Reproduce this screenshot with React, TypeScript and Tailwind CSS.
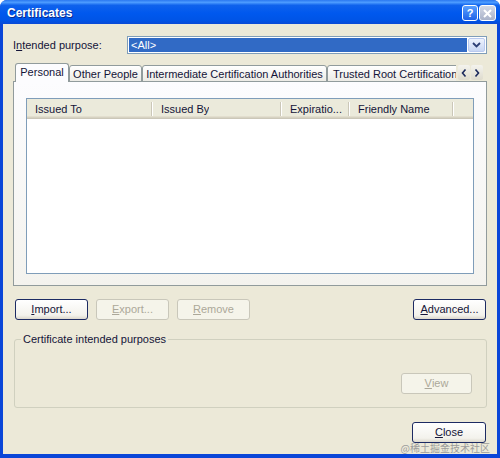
import type { ReactNode } from 'react';

const ink = 'text-[#141438]';

function XpButton({
  children,
  disabled = false,
  width = 'w-[73px]',
}: {
  children: ReactNode;
  disabled?: boolean;
  width?: string;
}) {
  return (
    <div
      className={`${width} flex h-[21px] items-center justify-center rounded-[3px] border text-[11px] ${
        disabled
          ? 'border-[#c9c7ba] bg-[#f5f4ea] text-[#aca899]'
          : `border-[#1d2b63] bg-[linear-gradient(to_bottom,#ffffff,#f3f2ec_80%,#dcd8cc)] ${ink}`
      }`}
    >
      {children}
    </div>
  );
}

function Tab({ label, selected = false, width }: { label: string; selected?: boolean; width: string }) {
  if (selected) {
    return (
      <div
        className={`${width} flex h-[19px] shrink-0 items-start justify-center rounded-t-[3px] border border-b-0 border-[#919b9c] bg-[#fcfcfe] pt-[1px] text-[11px] leading-[15px] ${ink}`}
      >
        {label}
      </div>
    );
  }
  return (
    <div
      className={`${width} flex h-[17px] shrink-0 items-start justify-center overflow-hidden whitespace-nowrap rounded-t-[3px] border border-[#919b9c] bg-[linear-gradient(to_bottom,#ffffff,#ecebe5)] pt-[1px] text-[11px] leading-[14px] ${ink}`}
    >
      {label}
    </div>
  );
}

function HeaderCell({ children, width }: { children?: ReactNode; width: string }) {
  return (
    <div className={`${width} flex h-full shrink-0 items-center justify-between`}>
      <span className={`truncate pl-[8px] text-[11px] ${ink}`}>{children}</span>
      <div className="h-[14px] w-[2px] border-l border-r border-l-[#cbc7b8] border-r-white" />
    </div>
  );
}

function Chevron({ dir }: { dir: 'left' | 'right' }) {
  return (
    <svg width="6" height="8" viewBox="0 0 6 8">
      <path
        d={dir === 'left' ? 'M4.5 0.5 L1.5 4 L4.5 7.5' : 'M1.5 0.5 L4.5 4 L1.5 7.5'}
        fill="none"
        stroke="#1c2a5c"
        strokeWidth="1.6"
      />
    </svg>
  );
}

export default function App() {
  return (
    <div className="relative flex h-[458px] w-[500px] flex-col overflow-hidden rounded-t-[7px] bg-[#0a46d8] font-['Liberation_Sans',Tahoma,sans-serif]">
      {/* title bar */}
      <div className="flex h-[24px] shrink-0 items-center justify-between bg-[linear-gradient(to_bottom,#2a78f0_0%,#4d9cff_10%,#0f62ec_22%,#0058ee_55%,#0054e6_85%,#0a4ad6_100%)] pl-[7px] pr-[4px] pt-[2px]">
        <span className="text-[12px] font-bold text-white [text-shadow:1px_1px_0_#0b2a8c]">
          Certificates
        </span>
        <div className="flex gap-[1px]">
          <div className="flex h-[16px] w-[16px] items-center justify-center rounded-[3px] border border-white bg-[linear-gradient(to_bottom,#5aa0ff,#1f62e8)] text-[11px] font-bold leading-none text-white">
            ?
          </div>
          <div className="flex h-[16px] w-[17px] items-center justify-center rounded-[3px] border border-white bg-[linear-gradient(to_bottom,#d4d9e6,#a9b2c9)]">
            <svg width="9" height="9" viewBox="0 0 9 9">
              <path d="M1 1 L8 8 M8 1 L1 8" stroke="#ffffff" strokeWidth="2" />
            </svg>
          </div>
        </div>
      </div>

      {/* body */}
      <div className="mx-[3px] mb-[4px] flex flex-1 flex-col bg-[#ece9d8] px-[10px]">
        {/* intended purpose */}
        <div className="mt-[12px] flex h-[18px] items-center">
          <span className={`w-[114px] text-[11px] ${ink}`}>
            I<span className="underline">n</span>tended purpose:
          </span>
          <div className="flex h-[18px] flex-1 border border-[#7f9db9] bg-white p-[1px]">
            <div className="flex flex-1 items-center bg-[#316ac5] pl-[2px] text-[11px] text-white">
              &lt;All&gt;
            </div>
            <div className="ml-[1px] flex w-[17px] items-center justify-center rounded-[2px] border border-[#b9c9ef] bg-[linear-gradient(to_bottom,#eef3fd,#c8d6f3)]">
              <svg width="9" height="6" viewBox="0 0 9 6">
                <path d="M1 1 L4.5 4.5 L8 1" fill="none" stroke="#2d3f75" strokeWidth="1.8" />
              </svg>
            </div>
          </div>
        </div>

        {/* tabs */}
        <div className="relative z-10 mb-[-1px] mt-[9px] flex h-[19px] items-end pl-[2px]">
          <div className="flex w-[441px] items-end overflow-hidden">
            <Tab label="Personal" selected width="w-[54px]" />
            <Tab label="Other People" width="w-[73px]" />
            <Tab label="Intermediate Certification Authorities" width="w-[185px]" />
            <div
              className={`flex h-[17px] w-[140px] shrink-0 items-start whitespace-nowrap rounded-t-[3px] border border-[#919b9c] bg-[linear-gradient(to_bottom,#ffffff,#ecebe5)] pl-[5px] pt-[1px] text-[11px] leading-[14px] ${ink}`}
            >
              Trusted Root Certification Authorities
            </div>
          </div>
          <div className="mb-[2px] ml-[2px] flex gap-[1px]">
            <div className="flex h-[15px] w-[12px] items-center justify-center rounded-[2px] bg-[linear-gradient(to_bottom,#f4f3ee,#dedbcd)]">
              <Chevron dir="left" />
            </div>
            <div className="flex h-[15px] w-[12px] items-center justify-center rounded-[2px] bg-[linear-gradient(to_bottom,#f4f3ee,#dedbcd)]">
              <Chevron dir="right" />
            </div>
          </div>
        </div>

        {/* tab panel */}
        <div className="h-[205px] border border-[#919b9c] bg-[linear-gradient(to_bottom,#fcfcfe,#f4f3ee)] px-[12px] pt-[16px]">
          <div className="h-[176px] border border-[#7f9db9] bg-white">
            <div className="flex h-[20px] bg-[#ebeadb] shadow-[inset_0_-1px_0_#cbc7b8,inset_0_-2px_0_#d6d2c2,inset_0_-3px_0_#e2dece]">
              <HeaderCell width="w-[126px]">Issued To</HeaderCell>
              <HeaderCell width="w-[129px]">Issued By</HeaderCell>
              <HeaderCell width="w-[68px]">Expiratio...</HeaderCell>
              <HeaderCell width="w-[104px]">Friendly Name</HeaderCell>
            </div>
          </div>
        </div>

        {/* action buttons */}
        <div className="mt-[13px] flex pl-[2px] pr-[1px]">
          <div className="flex gap-[8px]">
            <XpButton>
              <span className="underline">I</span>mport...
            </XpButton>
            <XpButton disabled>
              <span className="underline">E</span>xport...
            </XpButton>
            <XpButton disabled>
              <span className="underline">R</span>emove
            </XpButton>
          </div>
          <div className="ml-auto">
            <XpButton>
              <span className="underline">A</span>dvanced...
            </XpButton>
          </div>
        </div>

        {/* purposes group */}
        <div className="relative ml-[1px] mt-[19px] h-[69px] rounded-[3px] border border-[#d0d0bf]">
          <span className={`absolute -top-[7px] left-[6px] bg-[#ece9d8] px-[2px] text-[11px] leading-[13px] ${ink}`}>
            Certificate intended purposes
          </span>
          <div className="flex justify-end pr-[14px] pt-[33px]">
            <XpButton disabled width="w-[71px]">
              <span className="underline">V</span>iew
            </XpButton>
          </div>
        </div>

        <div className="mt-[14px] flex justify-end pr-[1px]">
          <XpButton width="w-[74px]">
            <span className="underline">C</span>lose
          </XpButton>
        </div>
      </div>

      <span className="absolute bottom-[4px] right-[10px] font-['Noto_Sans_CJK_SC',sans-serif] text-[10px] leading-[12px] text-[#9c9c9c]">
        @稀土掘金技术社区
      </span>
    </div>
  );
}
